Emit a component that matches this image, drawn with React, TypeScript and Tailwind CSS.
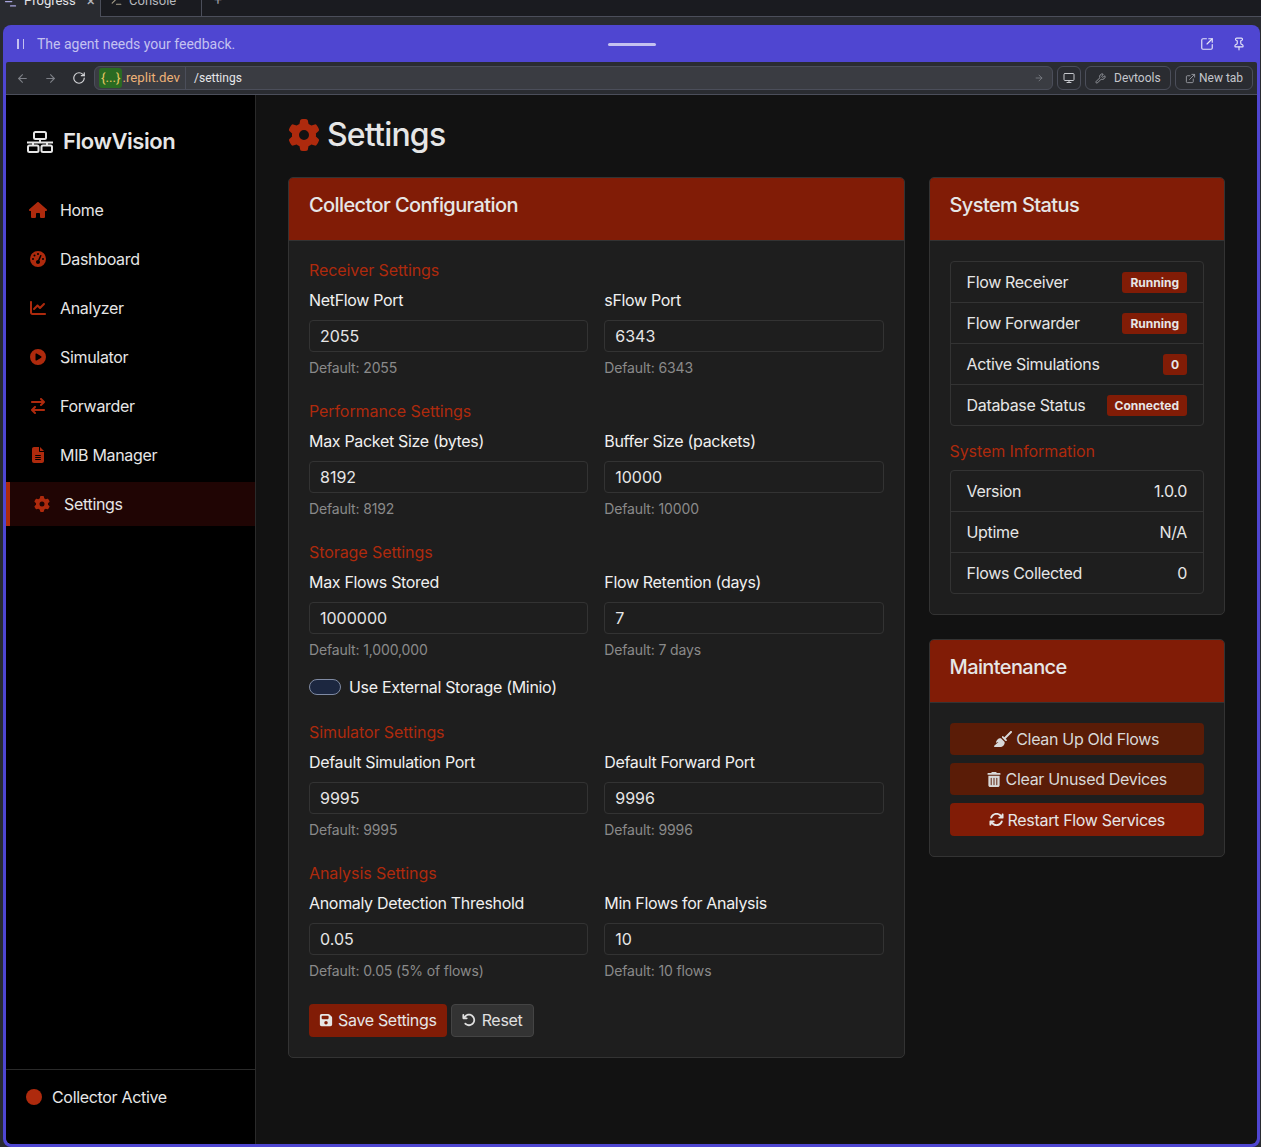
import {
  FaArrowRightArrowLeft,
  FaArrowRotateLeft,
  FaArrowsRotate,
  FaBroom,
  FaChartLine,
  FaCirclePlay,
  FaFileLines,
  FaFloppyDisk,
  FaGaugeHigh,
  FaGear,
  FaHouse,
  FaTrashCan,
} from "react-icons/fa6";
import {
  ArrowLeft,
  ArrowRight,
  ChartNoAxesGantt,
  ExternalLink,
  Monitor,
  Pin,
  RotateCw,
  SquareArrowOutUpRight,
  TerminalIcon,
  Wrench,
} from "lucide-react";
import type { ReactNode } from "react";

const nav = [
  { label: "Home", icon: <FaHouse className="h-[18px] w-[18px] shrink-0" /> },
  { label: "Dashboard", icon: <FaGaugeHigh className="h-4 w-4" /> },
  { label: "Analyzer", icon: <FaChartLine className="h-4 w-4" /> },
  { label: "Simulator", icon: <FaCirclePlay className="h-4 w-4" /> },
  { label: "Forwarder", icon: <FaArrowRightArrowLeft className="h-4 w-4" /> },
  { label: "MIB Manager", icon: <FaFileLines className="h-4 w-4" /> },
];

const sections = [
  {
    title: "Receiver Settings",
    fields: [
      { label: "NetFlow Port", value: "2055", help: "Default: 2055" },
      { label: "sFlow Port", value: "6343", help: "Default: 6343" },
    ],
  },
  {
    title: "Performance Settings",
    fields: [
      { label: "Max Packet Size (bytes)", value: "8192", help: "Default: 8192" },
      { label: "Buffer Size (packets)", value: "10000", help: "Default: 10000" },
    ],
  },
  {
    title: "Storage Settings",
    toggle: "Use External Storage (Minio)",
    fields: [
      { label: "Max Flows Stored", value: "1000000", help: "Default: 1,000,000" },
      { label: "Flow Retention (days)", value: "7", help: "Default: 7 days" },
    ],
  },
  {
    title: "Simulator Settings",
    fields: [
      { label: "Default Simulation Port", value: "9995", help: "Default: 9995" },
      { label: "Default Forward Port", value: "9996", help: "Default: 9996" },
    ],
  },
  {
    title: "Analysis Settings",
    fields: [
      { label: "Anomaly Detection Threshold", value: "0.05", help: "Default: 0.05 (5% of flows)" },
      { label: "Min Flows for Analysis", value: "10", help: "Default: 10 flows" },
    ],
  },
];

const statusRows = [
  { label: "Flow Receiver", badge: "Running" },
  { label: "Flow Forwarder", badge: "Running" },
  { label: "Active Simulations", badge: "0" },
  { label: "Database Status", badge: "Connected" },
];

const infoRows = [
  { label: "Version", value: "1.0.0" },
  { label: "Uptime", value: "N/A" },
  { label: "Flows Collected", value: "0" },
];

function Logo() {
  return (
    <svg viewBox="0 0 28 22" className="h-[22px] w-[28px]" fill="none" stroke="currentColor" strokeWidth={2}>
      <rect x="8" y="1" width="12" height="7" rx="1.5" />
      <path d="M14 8v3M1 11.5h26M7 11.5v3M21 11.5v3" />
      <rect x="2" y="14.5" width="10.5" height="6.5" rx="1.5" />
      <rect x="15.5" y="14.5" width="10.5" height="6.5" rx="1.5" />
    </svg>
  );
}

function Card({ title, children }: { title: string; children: ReactNode }) {
  return (
    <div className="overflow-hidden rounded-[5px] border border-[#333333] bg-[#1e1e1e]">
      <div className="flex h-[63px] items-start border-b border-[#333333] bg-[#811c06] px-5 pt-[13px] text-[20px] leading-[28px] font-medium tracking-[-0.03em] text-[#e6e6e6]">
        {title}
      </div>
      <div className="p-5">{children}</div>
    </div>
  );
}

function Field({ label, value, help }: { label: string; value: string; help: string }) {
  return (
    <div>
      <div className="text-[16px] leading-6 tracking-[-0.02em] text-[#f0f0f0]">{label}</div>
      <div className="mt-2 flex h-[32px] items-center rounded-[4px] border border-[#333333] bg-[#1e1e1e] px-[10px] text-[16px] text-[#e6e6e6]">
        {value}
      </div>
      <div className="mt-[4.6px] text-[14px] leading-[21px] tracking-[-0.01em] text-[#8a8a8a]">{help}</div>
    </div>
  );
}

function ChromeButton({ children, className }: { children: ReactNode; className: string }) {
  return (
    <div
      className={`flex h-[24px] items-center rounded-[6px] border border-[#4b4e5a] text-[12px] text-[#c5c7cc] ${className}`}
    >
      {children}
    </div>
  );
}

export default function App() {
  return (
    <div className="h-[1147px] w-[1261px] overflow-hidden bg-[#292b30] font-['Inter',sans-serif]">
      {/* replit workspace tabs, cut off by the top of the window */}
      <div className="flex h-[17px] items-end overflow-hidden font-['Roboto',sans-serif]">
        <div className="flex h-[32px] w-[100px] shrink-0 items-center text-[13px] text-[#e4e5e8]">
          <ChartNoAxesGantt className="ml-[3px] h-[15px] w-[15px] text-[#a9a6e0]" />
          <span className="ml-[6px]">Progress</span>
          <span className="ml-[11px] text-[15px] text-[#b5b7bc]">×</span>
        </div>
        <div className="flex h-[32px] w-[102px] shrink-0 items-center border-x border-b border-[#4b4e5a] bg-[#1a1b20] pl-[9px] text-[13px] text-[#b5b7bc]">
          <TerminalIcon className="mr-[6px] h-[13px] w-[13px] text-[#a9a18c]" />
          Console
        </div>
        <div className="flex h-[32px] flex-1 items-center border-b border-[#4b4e5a] bg-[#1a1b20] pr-[8px] pl-3 text-[14px] text-[#9a9ca3]">
          +
          <div className="mt-[-14px] ml-auto flex flex-col gap-[2px]">
            <span className="h-[2px] w-[2px] rounded-full bg-[#c5c7cc]" />
            <span className="h-[2px] w-[2px] rounded-full bg-[#c5c7cc]" />
          </div>
        </div>
      </div>

      <div className="mt-2 ml-[3px] flex h-[1122px] w-[1257px] flex-col rounded-t-[8px] rounded-b-[8px] bg-[#4f46d1] px-[3px] pb-[3px] font-['Roboto',sans-serif]">
        <div className="flex h-[37px] shrink-0 items-center pt-[1px] pr-[10px] pl-[10px] text-[14px] text-[#c4c1f0]">
          <span className="mr-[13px] ml-[1px] flex w-[7px] gap-[4px]">
            <span className="h-[10px] w-[1.5px] bg-[#c4c1f0]" />
            <span className="h-[10px] w-[1.5px] bg-[#c4c1f0]" />
          </span>
          <span className="w-[200px] whitespace-nowrap">The agent needs your feedback.</span>
          <span className="ml-[371px] h-[3px] w-[48px] rounded-full bg-[#c4c1f0]" />
          <SquareArrowOutUpRight className="ml-[544px] h-[14px] w-[14px] text-[#e4e3f8]" />
          <Pin className="ml-[18px] h-[14px] w-[14px] text-[#e4e3f8]" />
        </div>

        <div className="flex h-[33px] shrink-0 items-center gap-1 rounded-t-[2px] border-b border-[#4b4e5a] bg-[#2a2c31] pr-1 text-[12px]">
          <ArrowLeft className="ml-[10px] h-[13px] w-[13px] text-[#7d8087]" />
          <ArrowRight className="ml-[11px] h-[13px] w-[13px] text-[#7d8087]" />
          <RotateCw className="mr-[4px] ml-[11px] h-[14px] w-[14px] text-[#d5d6d9]" />
          <div className="flex h-[24px] flex-1 items-center rounded-[6px] border border-[#4b4e5a] bg-[#3a3c42]">
            <div className="flex h-full w-[91px] items-center border-r border-[#4b4e5a] pl-[4px] text-[13.25px] text-[#eeb277]">
              <span className="rounded-[3px] bg-[#2a6b22] px-[2px] text-[#e9c563]">{"{...}"}</span>
              .replit.dev
            </div>
            <span className="ml-2 text-[#e6e7ea]">/settings</span>
            <ArrowRight className="mr-2 ml-auto h-[10px] w-[10px] text-[#7d8087]" />
          </div>
          <ChromeButton className="w-[24px] justify-center">
            <Monitor className="h-[12px] w-[12px]" />
          </ChromeButton>
          <ChromeButton className="w-[86px] gap-[8px] pl-[9px]">
            <Wrench className="h-[11px] w-[11px] text-[#9a9ca3]" />
            Devtools
          </ChromeButton>
          <ChromeButton className="w-[78px] gap-[3px] pl-[9px]">
            <ExternalLink className="h-[11px] w-[11px] text-[#9a9ca3]" />
            New tab
          </ChromeButton>
        </div>

        <div className="flex min-h-0 flex-1 overflow-hidden rounded-b-[6px] bg-[#121212] font-['Inter',sans-serif]">
          <aside className="flex w-[250px] shrink-0 flex-col border-r border-[#2a2a2a] bg-black">
            <div className="flex items-center gap-[9px] pt-[30px] pl-[20px] text-[22px] leading-[33px] font-semibold tracking-[-0.02em] text-[#e6e6e6]">
              <Logo />
              FlowVision
            </div>
            <nav className="mt-[30px] flex flex-col gap-[5px]">
              {nav.map((item) => (
                <div key={item.label} className="flex h-[44px] items-center pl-[24px] text-[16px] tracking-[-0.02em] text-[#e6e6e6]">
                  <span className="flex w-[30px] text-[#ae2a0d]">
                    <span className="flex w-[16px] justify-center">{item.icon}</span>
                  </span>
                  {item.label}
                </div>
              ))}
              <div className="flex h-[44px] items-center border-l-4 border-[#ae2a0d] bg-[#200504] pl-[24px] text-[16px] tracking-[-0.02em] text-[#e6e6e6]">
                <span className="flex w-[30px] text-[#ae2a0d]">
                  <FaGear className="h-4 w-4" />
                </span>
                Settings
              </div>
            </nav>
            <div className="mt-auto flex h-[75px] items-start gap-[10px] border-t border-[#2a2a2a] pt-[15px] pl-[20px] text-[16px] leading-6 tracking-[-0.02em] text-[#e6e6e6]">
              <span className="mt-[4px] h-4 w-4 rounded-full bg-[#ae2a0d]" />
              Collector Active
            </div>
          </aside>

          <main className="min-w-0 flex-1 px-8 pt-[18px]">
            <h1 className="flex h-[44px] items-center gap-[7px] text-[32px] font-medium tracking-[-0.025em] text-[#e6e6e6]">
              <FaGear className="h-8 w-8 text-[#ae2a0d]" />
              Settings
            </h1>
            <div className="mt-[20px] grid grid-cols-[616.5px_296.5px] items-start gap-6">
              <Card title="Collector Configuration">
                <div className="-mt-[3px]">
                  {sections.map((section) => (
                    <div key={section.title} className="mb-[21px]">
                      <div className="mb-[6.4px] text-[16px] leading-6 tracking-[-0.005em] text-[#ae2a0d]">{section.title}</div>
                      <div className="grid grid-cols-2 gap-x-[16px]">
                        {section.fields.map((field) => (
                          <Field key={field.label} {...field} />
                        ))}
                      </div>
                      {section.toggle && (
                        <div className="mt-[15px] mb-[12px] flex items-center gap-2 text-[16px] leading-6 tracking-[-0.02em] text-[#f0f0f0]">
                          <span className="h-4 w-8 rounded-full border border-[#7f8aa3] bg-[#1c2740]" />
                          {section.toggle}
                        </div>
                      )}
                    </div>
                  ))}
                </div>
                <div className="mt-[23px] flex gap-1 text-[16px] tracking-[-0.02em]">
                  <div className="flex h-[33px] items-center gap-[5px] rounded-[4px] bg-[#811c06] px-[10px] text-[#e6e6e6]">
                    <FaFloppyDisk className="h-[14px] w-[14px]" />
                    Save Settings
                  </div>
                  <div className="flex h-[33px] items-center gap-[6px] rounded-[4px] border border-[#444444] bg-[#333333] pr-[11px] pl-[10px] text-[#e0e0e0]">
                    <FaArrowRotateLeft className="h-[14px] w-[14px]" />
                    Reset
                  </div>
                </div>
              </Card>

              <div className="flex flex-col gap-6">
                <Card title="System Status">
                  <div className="rounded-[4px] border border-[#333333]">
                    {statusRows.map((row, i) => (
                      <div
                        key={row.label}
                        className={`flex items-center justify-between px-4 text-[16px] tracking-[-0.02em] text-[#e6e6e6] ${i ? "h-[41px] border-t border-[#333333]" : "h-[40px]"}`}
                      >
                        {row.label}
                        <span className="rounded-[3px] bg-[#811c06] px-2 py-[3px] text-[12px] leading-[15px] font-bold tracking-normal text-[#e6e6e6]">
                          {row.badge}
                        </span>
                      </div>
                    ))}
                  </div>
                  <div className="mt-[13px] mb-[7px] text-[16px] leading-6 tracking-[-0.005em] text-[#ae2a0d]">System Information</div>
                  <div className="rounded-[4px] border border-[#333333]">
                    {infoRows.map((row, i) => (
                      <div
                        key={row.label}
                        className={`flex items-center justify-between px-4 text-[16px] tracking-[-0.02em] text-[#e6e6e6] ${i ? "h-[41px] border-t border-[#333333]" : "h-[40px]"}`}
                      >
                        {row.label}
                        <span>{row.value}</span>
                      </div>
                    ))}
                  </div>
                </Card>

                <Card title="Maintenance">
                  <div className="flex flex-col gap-2 text-[16px] tracking-[-0.02em] text-[#d8d8d8]">
                    <div className="flex h-[32px] items-center justify-center gap-[4px] rounded-[4px] bg-[#5a1c07]">
                      <FaBroom className="h-[16px] w-[18px]" />
                      Clean Up Old Flows
                    </div>
                    <div className="flex h-[32px] items-center justify-center gap-[5px] rounded-[4px] bg-[#5a1c07]">
                      <FaTrashCan className="h-[15px] w-[14px]" />
                      Clear Unused Devices
                    </div>
                    <div className="flex h-[33px] items-center justify-center gap-[4px] rounded-[4px] bg-[#811c06] text-[#e6e6e6]">
                      <FaArrowsRotate className="h-[15px] w-[15px]" />
                      Restart Flow Services
                    </div>
                  </div>
                </Card>
              </div>
            </div>
          </main>
        </div>
      </div>
    </div>
  );
}
